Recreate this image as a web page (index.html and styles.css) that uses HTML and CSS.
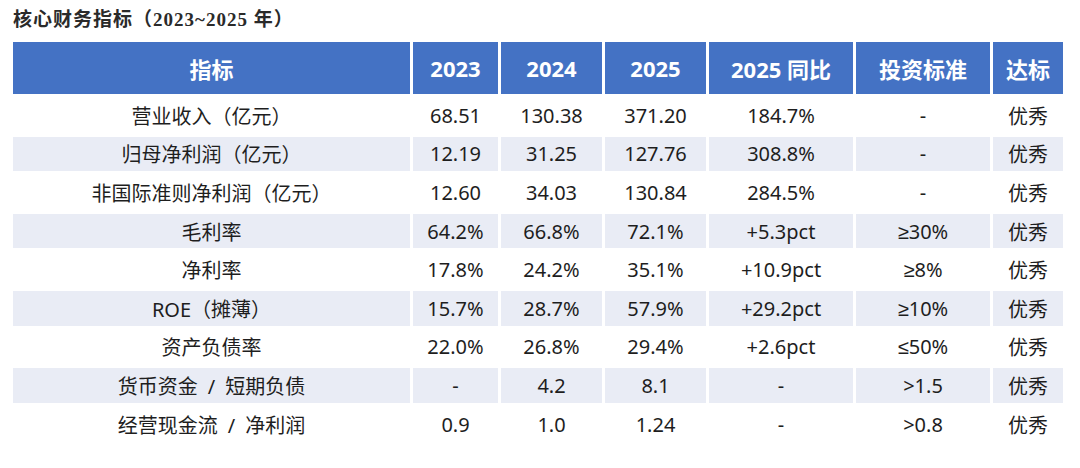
FILE: index.html
```html
<!DOCTYPE html>
<html lang="zh-CN">
<head>
<meta charset="utf-8">
<title>核心财务指标</title>
<link rel="stylesheet" href="styles.css">
</head>
<body>
<div class="page">
  <h1 class="title">核心财务指标（2023~2025 年）</h1>
  <table class="fin">
    <colgroup>
      <col class="c-name">
      <col class="c-2023">
      <col class="c-2024">
      <col class="c-2025">
      <col class="c-yoy">
      <col class="c-std">
      <col class="c-ok">
    </colgroup>
    <thead>
      <tr><th>指标</th><th>2023</th><th>2024</th><th>2025</th><th>2025 同比</th><th>投资标准</th><th>达标</th></tr>
    </thead>
    <tbody>
      <tr><td>营业收入（亿元）</td><td>68.51</td><td>130.38</td><td>371.20</td><td>184.7%</td><td>-</td><td>优秀</td></tr>
      <tr class="alt"><td>归母净利润（亿元）</td><td>12.19</td><td>31.25</td><td>127.76</td><td>308.8%</td><td>-</td><td>优秀</td></tr>
      <tr><td>非国际准则净利润（亿元）</td><td>12.60</td><td>34.03</td><td>130.84</td><td>284.5%</td><td>-</td><td>优秀</td></tr>
      <tr class="alt"><td>毛利率</td><td>64.2%</td><td>66.8%</td><td>72.1%</td><td>+5.3pct</td><td>≥30%</td><td>优秀</td></tr>
      <tr><td>净利率</td><td>17.8%</td><td>24.2%</td><td>35.1%</td><td>+10.9pct</td><td>≥8%</td><td>优秀</td></tr>
      <tr class="alt"><td>ROE（摊薄）</td><td>15.7%</td><td>28.7%</td><td>57.9%</td><td>+29.2pct</td><td>≥10%</td><td>优秀</td></tr>
      <tr><td>资产负债率</td><td>22.0%</td><td>26.8%</td><td>29.4%</td><td>+2.6pct</td><td>≤50%</td><td>优秀</td></tr>
      <tr class="alt"><td>货币资金<span class="sep">/</span>短期负债</td><td>-</td><td>4.2</td><td>8.1</td><td>-</td><td>&gt;1.5</td><td>优秀</td></tr>
      <tr><td>经营现金流<span class="sep">/</span>净利润</td><td>0.9</td><td>1.0</td><td>1.24</td><td>-</td><td>&gt;0.8</td><td>优秀</td></tr>
    </tbody>
  </table>
</div>
</body>
</html>
```

FILE: styles.css
```css
html, body {
  margin: 0;
  padding: 0;
  background: #ffffff;
}

.page {
  width: 1080px;
  height: 468px;
  padding: 8px 0 0 10px;
  box-sizing: border-box;
  overflow: hidden;
}

.title {
  margin: 0 0 6px 3px;
  font-family: "Liberation Serif", "Noto Sans CJK SC", serif;
  font-size: 19px;
  letter-spacing: 1px;
  line-height: 24px;
  font-weight: bold;
  color: #2a2a2a;
}

.fin {
  border-collapse: separate;
  border-spacing: 3px 4px;
  table-layout: fixed;
  width: 1056px;
  margin: 0;
  font-family: "Noto Sans", "Liberation Sans", "Noto Sans CJK SC", sans-serif;
}

.c-name { width: 397px; }
.c-2023 { width: 85px; }
.c-2024 { width: 101px; }
.c-2025 { width: 101px; }
.c-yoy  { width: 144px; }
.c-std  { width: 134px; }
.c-ok   { width: 70px; }

.fin th {
  height: 52px;
  padding: 0;
  background: #4472c4;
  color: #ffffff;
  font-size: 22px;
  font-weight: bold;
  text-align: center;
  vertical-align: middle;
}

.fin td {
  height: 34.6px;
  padding: 0;
  font-size: 20px;
  color: #1e1e1e;
  text-align: center;
  vertical-align: middle;
  white-space: nowrap;
}

.fin .sep {
  display: inline-block;
  margin: 0 10px;
}

.fin tr.alt td {
  background: #e9ecf5;
}
```
